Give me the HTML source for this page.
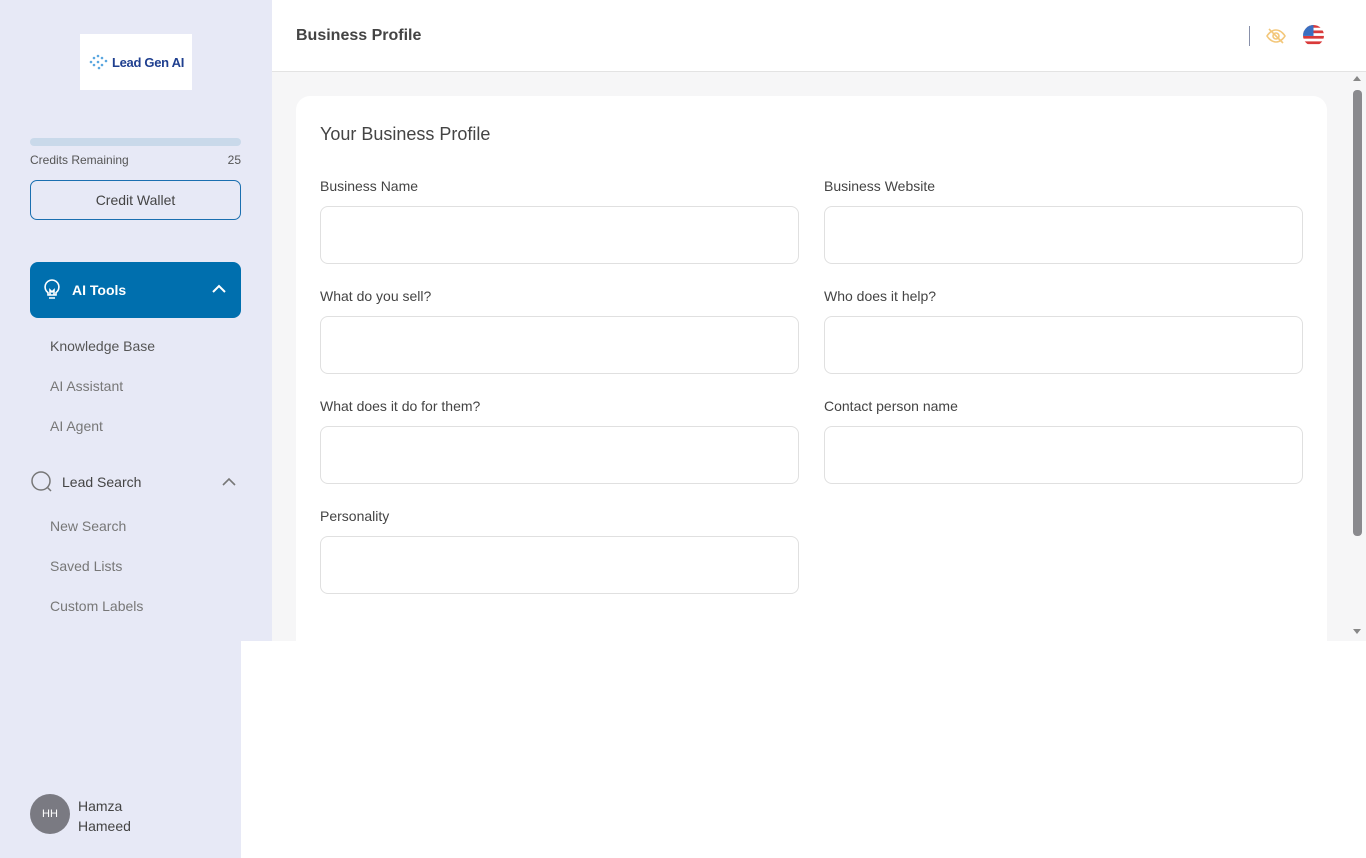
<!DOCTYPE html>
<html><head><meta charset="utf-8"><style>
*{box-sizing:border-box;margin:0;padding:0}
body{width:1366px;height:858px;position:relative;background:#fff;font-family:"Liberation Sans",sans-serif;overflow:hidden;color:#444}
.sb{position:absolute;left:0;top:0;width:272px;height:641px;background:#e7e9f6}
.sb2{position:absolute;left:0;top:641px;width:241px;height:217px;background:#e7e9f6}
.logo{position:absolute;left:80px;top:34px;width:112px;height:56px;background:#fff;display:flex;align-items:center;justify-content:center;font-weight:bold;font-size:13px;color:#1f3f8f;letter-spacing:-0.3px}
.bar{position:absolute;left:30px;top:138px;width:211px;height:8px;border-radius:4px;background:#c9d9ea}
.cr{position:absolute;left:30px;top:153px;width:211px;font-size:12px;color:#555;display:flex;justify-content:space-between}
.cw{position:absolute;left:30px;top:180px;width:211px;height:40px;border:1px solid #1a6fb0;border-radius:7px;display:flex;align-items:center;justify-content:center;font-size:14px;color:#444}
.ait{position:absolute;left:30px;top:262px;width:211px;height:56px;background:#006fae;border-radius:8px;color:#fff;font-weight:bold;font-size:14px}
.it{position:absolute;left:50px;font-size:14px;color:#777}
.main{position:absolute;left:272px;top:0;width:1094px;height:641px;background:#f6f6f7}
.hdr{position:absolute;left:0;top:0;width:1094px;height:72px;background:#fff;border-bottom:1px solid #e3e3e3}
.card{position:absolute;left:24px;top:96px;width:1031px;height:560px;background:#fff;border-radius:14px}
.lbl{position:absolute;font-size:14px;color:#444}
.inp{position:absolute;width:479px;height:58px;border:1px solid #e0e0e0;border-radius:8px;background:#fff}
</style></head><body>
<div class="sb"></div><div class="sb2"></div>
<div class="logo"><svg width="22" height="18" viewBox="0 0 22 18" style="margin-right:2px"><g fill="#5aa7e0"><circle cx="3" cy="9" r="1.3"/><circle cx="6" cy="5" r="1.3"/><circle cx="6" cy="12" r="1.3"/><circle cx="10" cy="3" r="1.3"/><circle cx="10" cy="9" r="1.3"/><circle cx="14" cy="5" r="1.3"/><circle cx="14" cy="12" r="1.3"/><circle cx="18" cy="8" r="1.3"/><circle cx="11" cy="15" r="1.3"/></g></svg>Lead Gen AI</div>
<div class="bar"></div>
<div class="cr"><span>Credits Remaining</span><span>25</span></div>
<div class="cw">Credit Wallet</div>
<div class="ait"><svg style="position:absolute;left:13px;top:17px" width="18" height="22" viewBox="0 0 18 22" fill="none" stroke="#fff" stroke-width="1.6"><path d="M9 1a7 7 0 0 0-4 12.7V16h8v-2.3A7 7 0 0 0 9 1z"/><path d="M6 19h6M7 16v-5l2 2 2-2v5"/></svg><span style="position:absolute;left:42px;top:20px">AI Tools</span><svg style="position:absolute;left:181px;top:22px" width="16" height="10" viewBox="0 0 16 10" fill="none" stroke="#fff" stroke-width="2"><path d="M2 8l6-6 6 6"/></svg></div>
<div class="it" style="top:338px;color:#555">Knowledge Base</div>
<div class="it" style="top:378px">AI Assistant</div>
<div class="it" style="top:418px">AI Agent</div>
<svg style="position:absolute;left:31px;top:471px" width="22" height="22" viewBox="0 0 22 22" fill="none" stroke="#777" stroke-width="1.5"><circle cx="10" cy="10" r="9"/><path d="M16 16l4 4"/></svg>
<div style="position:absolute;left:62px;top:474px;font-size:14px;color:#444">Lead Search</div>
<svg style="position:absolute;left:221px;top:477px" width="16" height="10" viewBox="0 0 16 10" fill="none" stroke="#777" stroke-width="1.6"><path d="M2 8l6-6 6 6"/></svg>
<div class="it" style="top:518px">New Search</div>
<div class="it" style="top:558px">Saved Lists</div>
<div class="it" style="top:598px">Custom Labels</div>
<div style="position:absolute;left:30px;top:794px;width:40px;height:40px;border-radius:50%;background:#7a7a82;color:#fff;font-size:11px;display:flex;align-items:center;justify-content:center">HH</div>
<div style="position:absolute;left:78px;top:796px;font-size:14px;line-height:20px;color:#444">Hamza<br>Hameed</div>
<div class="main">
<div class="hdr"><div style="position:absolute;left:24px;top:27px;font-size:16px;font-weight:bold;color:#444">Business Profile</div>
<div style="position:absolute;left:977px;top:26px;width:1px;height:20px;background:#8890aa"></div>
<svg style="position:absolute;left:994px;top:27px" width="20" height="18" viewBox="0 0 20 18" fill="none" stroke="#f3c77a" stroke-width="1.6"><path d="M1 9s3.5-6 9-6 9 6 9 6-3.5 6-9 6-9-6-9-6z"/><circle cx="10" cy="9" r="3"/><path d="M3 2l14 14"/></svg>
<svg style="position:absolute;left:1031px;top:25px" width="21" height="21" viewBox="0 0 20 20"><defs><clipPath id="c"><circle cx="10" cy="10" r="10"/></clipPath></defs><g clip-path="url(#c)"><rect width="20" height="20" fill="#fff"/><g fill="#d93a3a"><rect y="0" width="20" height="2.6"/><rect y="5.2" width="20" height="2.6"/><rect y="10.4" width="20" height="2.6"/><rect y="15.6" width="20" height="2.6"/></g><rect width="10" height="10.4" fill="#3a6fc1"/></g></svg></div>
<div class="card">
<div style="position:absolute;left:24px;top:28px;font-size:18px;color:#444">Your Business Profile</div>
<div class="lbl" style="left:24px;top:82px">Business Name</div><div class="inp" style="left:24px;top:110px"></div>
<div class="lbl" style="left:528px;top:82px">Business Website</div><div class="inp" style="left:528px;top:110px"></div>
<div class="lbl" style="left:24px;top:192px">What do you sell?</div><div class="inp" style="left:24px;top:220px"></div>
<div class="lbl" style="left:528px;top:192px">Who does it help?</div><div class="inp" style="left:528px;top:220px"></div>
<div class="lbl" style="left:24px;top:302px">What does it do for them?</div><div class="inp" style="left:24px;top:330px"></div>
<div class="lbl" style="left:528px;top:302px">Contact person name</div><div class="inp" style="left:528px;top:330px"></div>
<div class="lbl" style="left:24px;top:412px">Personality</div><div class="inp" style="left:24px;top:440px"></div>
</div>
<div style="position:absolute;left:1080px;top:72px;width:14px;height:569px;background:#f6f6f7"></div>
<div style="position:absolute;left:1081px;top:90px;width:9px;height:446px;border-radius:4px;background:#8a8a8e"></div>
<div style="position:absolute;left:1081px;top:76px;border-left:4.5px solid transparent;border-right:4.5px solid transparent;border-bottom:5px solid #888"></div>
<div style="position:absolute;left:1081px;top:629px;border-left:4.5px solid transparent;border-right:4.5px solid transparent;border-top:5px solid #888"></div>
</div>
<div style="position:absolute;left:241px;top:641px;width:1125px;height:217px;background:#fff"></div>
</body></html>
